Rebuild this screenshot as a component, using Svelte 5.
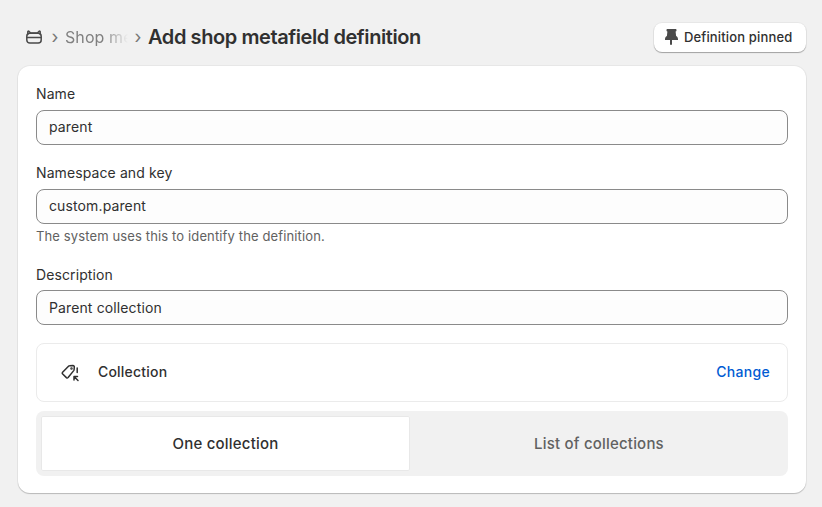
<script>
  const fields = [
    { label: 'Name', value: 'parent' },
    { label: 'Namespace and key', value: 'custom.parent', help: 'The system uses this to identify the definition.' },
    { label: 'Description', value: 'Parent collection' }
  ];
</script>

<div class="page">
  <header>
    <nav>
      <svg class="home" width="18" height="18" viewBox="0 0 18 18" fill="none" stroke="#4a4a4a" stroke-width="1.500" stroke-linejoin="round" stroke-linecap="round">
        <path d="M2.800 6.500V3.800c0-.6.700-.9 1.100-.5L5.600 5h6.800l1.700-1.700c.4-.4 1.100-.1 1.100.5v2.700" />
        <rect x="1.800" y="5.200" width="14.400" height="9.800" rx="3" />
        <path d="M2 9.500h14" />
      </svg>
      <span class="chev first">›</span>
      <span class="crumb">Shop me</span>
      <span class="chev">›</span>
      <h1>Add shop metafield definition</h1>
    </nav>
    <button class="pin">
      <svg width="16" height="18" viewBox="0 0 16 18" fill="#4a4a4a">
        <path d="M3.500 1h9c.6 0 1 .4 1 1v.5c0 .5-.4.900-.9 1l.5 4.500c1.200.7 1.900 1.900 1.900 3.200v.8H2v-.8c0-1.300.7-2.500 1.900-3.200l.5-4.500c-.5-.1-.9-.5-.9-1V2c0-.6.400-1 1-1z" />
        <rect x="7" y="11" width="2" height="6" rx="1" />
      </svg>
      Definition pinned
    </button>
  </header>

  <main class="card">
    {#each fields as f}
      <div class="field">
        <div class="label">{f.label}</div>
        <div class="input">{f.value}</div>
        {#if f.help}<div class="help">{f.help}</div>{/if}
      </div>
    {/each}

    <section class="type">
      <div class="type-left">
        <svg width="20" height="20" viewBox="0 0 20 20" fill="none" stroke="#303030" stroke-width="1.500" stroke-linejoin="round" stroke-linecap="round">
          <path d="M2.600 10.200 8.500 4.200c.3-.3.600-.4 1-.4l3.500-.2c.8 0 1.400.6 1.300 1.400l-.2 2.600c0 .4-.2.700-.4 1l-5.600 6.900c-.5.500-1.200.5-1.700.1L2.700 12c-.6-.5-.6-1.300-.1-1.800z" />
          <circle cx="11.500" cy="6.500" r=".5" />
          <path d="M17.200 6v4.500" />
          <path d="M14 14.500v3.500M14 14.500h3.500M14.300 14.800l3.700 3.700" />
        </svg>
        <span>Collection</span>
      </div>
      <span class="change">Change</span>
    </section>

    <div class="seg">
      <div class="opt on">One collection</div>
      <div class="opt">List of collections</div>
    </div>
  </main>
</div>

<style>
  :global(body) {
    background: #f1f1f1;
    font-family: Inter, "Noto Sans", sans-serif;
    color: #303030;
  }
  .page {
    height: 507px;
    box-sizing: border-box;
    padding: 22px 16px 0 18px;
    overflow: hidden;
  }
  header {
    height: 30px;
    display: flex;
    align-items: center;
    justify-content: space-between;
    margin-bottom: 14px;
  }
  nav {
    display: flex;
    align-items: center;
  }
  .home {
    margin-left: 7px;
  }
  .chev {
    color: #777;
    font-size: 18px;
    width: 20px;
    text-align: center;
    line-height: 20px;
    flex: none;
  }
  .chev.first {
    margin-left: 2px;
  }
  .crumb {
    width: 63px;
    white-space: nowrap;
    font-size: 16px;
    letter-spacing: .1px;
    color: #808080;
    -webkit-mask-image: linear-gradient(90deg, #000 60%, transparent 100%);
    mask-image: linear-gradient(90deg, #000 60%, transparent 100%);
  }
  h1 {
    margin: 0;
    font-size: 20px;
    line-height: 28px;
    font-weight: 600;
    letter-spacing: -.42px;
    color: #303030;
  }
  .pin {
    display: flex;
    align-items: center;
    gap: 5px;
    height: 29px;
    width: 152px;
    padding: 0 0 0 9px;
    border: 0;
    border-radius: 8px;
    background: #fff;
    box-shadow: 0 1px 1px rgba(0,0,0,.3), 0 0 0 1px rgba(0,0,0,.04);
    font: 500 13px Inter, sans-serif;
    letter-spacing: .15px;
    color: #303030;
  }
  .card {
    box-sizing: border-box;
    height: 427px;
    padding: 18px;
    background: #fff;
    border-radius: 12px;
    box-shadow: 0 1px 1px rgba(0,0,0,.2), 0 0 0 1px rgba(0,0,0,.04);
  }
  .field {
    margin-bottom: 18px;
  }
  .field:nth-child(3) {
    padding-top: 1px;
  }
  .field:nth-child(3) .label {
    margin-bottom: 5px;
  }
  .field:nth-child(3) .input {
    padding-bottom: 0;
  }
  .label {
    font-size: 14px;
    line-height: 20px;
    margin-bottom: 6px;
    letter-spacing: .1px;
  }
  .input {
    box-sizing: border-box;
    height: 35px;
    padding: 0 12px 2px;
    display: flex;
    align-items: center;
    font-size: 14px;
    letter-spacing: .12px;
    background: #fdfdfd;
    border: 1px solid #8a8a8a;
    border-radius: 8px;
  }
  .help {
    font-size: 13px;
    line-height: 20px;
    margin-top: 2px;
    letter-spacing: .13px;
    color: #616161;
  }
  .type {
    box-sizing: border-box;
    height: 59px;
    display: flex;
    align-items: center;
    justify-content: space-between;
    padding: 0 17px 2px 23px;
    border: 1px solid #ebebeb;
    border-radius: 8px;
    margin-bottom: 9px;
  }
  .type-left {
    display: flex;
    align-items: center;
    gap: 18px;
    font-size: 14px;
    font-weight: 550;
    letter-spacing: .2px;
  }
  .change {
    font-size: 14px;
    font-weight: 550;
    letter-spacing: .3px;
    color: #005bd3;
  }
  .seg {
    box-sizing: border-box;
    height: 65px;
    padding: 5px;
    display: grid;
    grid-template-columns: 369px 1fr;
    background: #f1f1f1;
    border-radius: 8px;
  }
  .opt {
    display: flex;
    align-items: center;
    justify-content: center;
    font-size: 15px;
    font-weight: 550;
    letter-spacing: .2px;
    color: #616161;
    border-radius: 2px;
    padding-left: 5px;
  }
  .on {
    background: #fff;
    color: #303030;
    padding-left: 0;
    box-shadow: inset 0 0 0 1px #e8e8e8;
  }
</style>
